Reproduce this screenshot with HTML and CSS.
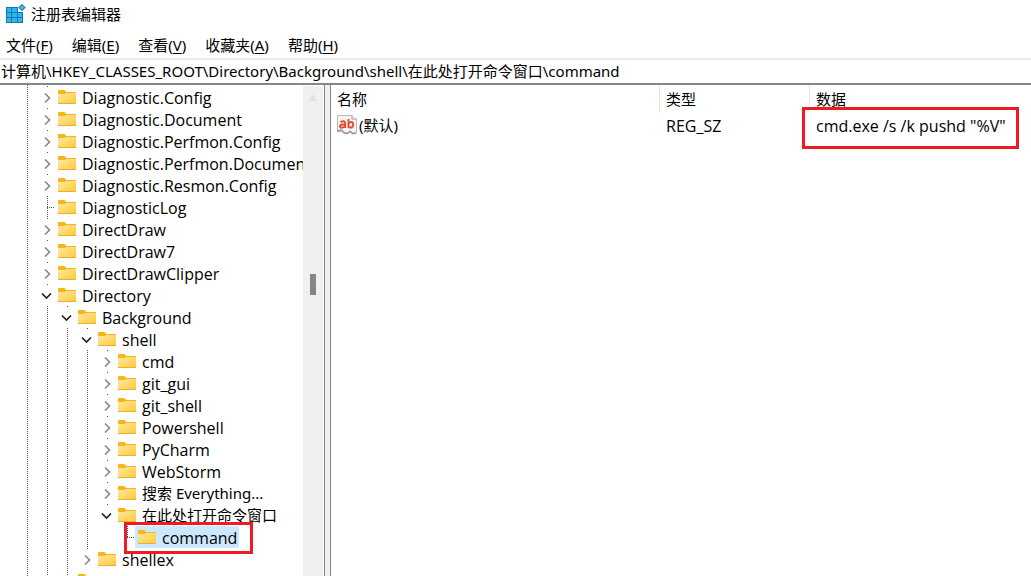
FILE: index.html
```html
<!DOCTYPE html>
<html lang="zh-CN">
  <head>
    <meta charset="UTF-8" />
    <title>注册表编辑器</title>
    <link rel="stylesheet" href="styles.css">
  </head>
  <body>
    <svg class="defs" aria-hidden="true">
      <defs>
        <linearGradient id="folderFill" x1="0" y1="0" x2="1" y2="1">
          <stop offset="0" stop-color="#ffe9a2" />
          <stop offset="1" stop-color="#ffc937" />
        </linearGradient>
        <symbol id="folder" viewBox="0 0 18 14">
          <path d="M0 1Q0 0 1 0H6.500L8 1.500V2H18V5H0Z" fill="#f8b51c" />
          <path d="M0 4H7L8 3H18V14H0Z" fill="url(#folderFill)" />
          <path d="M0 13.500H18" stroke="#eab030" />
        </symbol>
        <symbol id="right" viewBox="0 0 16 20">
          <path d="M6 6.500L10.500 11L6 15.500" fill="none" stroke="#8a8a8a" stroke-width="1.700" />
        </symbol>
        <symbol id="down" viewBox="0 0 16 20">
          <path d="M3 8.500L7.500 13L12 8.500" fill="none" stroke="#222" stroke-width="1.700" />
        </symbol>
      </defs>
    </svg>

    <!-- Barra de título -->
    <header class="titlebar">
      <svg class="app-icon" viewBox="0 0 20 20" aria-hidden="true">
        <path d="M0 3H12V8H17V19H0Z" fill="#0b78b8" />
        <path d="M1 4H5V8H1ZM6 4H11V8H6ZM1 9H5V13H1ZM6 9H11V13H6ZM12 9H16V13H12ZM1 14H5V18H1ZM6 14H11V18H6ZM12 14H16V18H12Z" fill="#35b4e4" />
        <path d="M16 -.2L19.800 3.500L16 7.200L12.200 3.500Z" fill="#1f84bd" />
        <path d="M16 1.500L18 3.500L16 5.500L14 3.500Z" fill="#55bfe8" />
      </svg>
      <h1>注册表编辑器</h1>
    </header>

    <!-- Menú -->
    <nav class="menu">
      <button>文件(<u>F</u>)</button>
      <button>编辑(<u>E</u>)</button>
      <button>查看(<u>V</u>)</button>
      <button>收藏夹(<u>A</u>)</button>
      <button>帮助(<u>H</u>)</button>
    </nav>

    <input class="address" type="text" aria-label="地址" value="计算机\HKEY_CLASSES_ROOT\Directory\Background\shell\在此处打开命令窗口\command" />

    <main class="panes">
      <!-- Árbol de claves -->
      <section class="tree-pane">
        <div class="tree">
          <ul id="tree" class="branch"></ul>
        </div>
        <div class="scrollbar">
          <svg class="scroll-up" viewBox="0 0 8 7" aria-hidden="true"><path d="M4 0L8 7H0Z" fill="#e2e2e2" /></svg>
          <div class="thumb"></div>
        </div>
      </section>

      <!-- Valores -->
      <section class="values-pane">
        <table class="values">
          <colgroup>
            <col class="col-name" />
            <col class="col-type" />
            <col />
          </colgroup>
          <thead>
            <tr><th>名称</th><th>类型</th><th>数据</th></tr>
          </thead>
          <tbody>
            <tr>
              <td>
                <div class="value-name">
                  <svg class="string-icon" viewBox="0 0 20 20" aria-hidden="true">
                    <path d="M.5 .5H15L19.500 4V18L16 19L13 17L10 19L7 18L4 16L.5 17Z" fill="#f4f4f4" stroke="#bbb" />
                    <path d="M15 .5V4H19.500" fill="#fff" stroke="#999" />
                    <path d="M.5 16L4 15L7 17.500L10 18.500L13 16.500L16 18.500L19 18" fill="none" stroke="#999" stroke-width="1.500" />
                    <path d="M3.500 7Q8 5 8 8V13M8 9.500Q3 9 3 11.500Q3.500 14 8 11.500M11.500 4V13M11.500 8.500Q16 5 16 9.500Q16 14 11.500 12" fill="none" stroke="#e0522d" stroke-width="2" />
                  </svg>
                  <span>(默认)</span>
                </div>
              </td>
              <td class="latin">REG_SZ</td>
              <td class="latin"><span class="marked">cmd.exe /s /k pushd "%V"</span></td>
            </tr>
          </tbody>
        </table>
      </section>
    </main>

    <script src="script.js"></script>
  </body>
</html>
```
FILE: styles.css
```css
* {
  box-sizing: border-box;
}

body {
  margin: 0;
  height: 100vh;
  display: flex;
  flex-direction: column;
  overflow: hidden;
  background: #fff;
  color: #000;
  font-family: "Noto Sans", "Noto Sans CJK SC", sans-serif;
  font-size: 15px;
  line-height: 22px;
}

button,
input {
  font: inherit;
  color: inherit;
  border: 0;
  padding: 0;
  background: none;
}

.latin {
  font-family: "Open Sans", sans-serif;
  font-size: 16px;
}

.defs {
  position: absolute;
  width: 0;
  height: 0;
}

/* Barra de título */
.titlebar {
  display: flex;
  align-items: center;
  gap: 5px;
  height: 30px;
  padding: 0 6px 2px;
}

.titlebar h1 {
  margin: 0;
  font-size: 15px;
  font-weight: normal;
}

.app-icon {
  width: 20px;
  height: 20px;
}

.menu {
  display: flex;
  gap: 19px;
  height: 28px;
  padding: 2px 6px 0;
  align-items: center;
}

.menu u {
  text-underline-offset: 2px;
}

.address {
  width: 100%;
  height: 27px;
  padding: 0 1px 2px;
  border-top: 2px solid #ececec;
  border-bottom: 2px solid #83868c;
}

.panes {
  flex: 1;
  min-height: 0;
  display: flex;
  background: #f0f0f0;
}

/* Árbol */
.tree-pane {
  flex: 0 0 325px;
  display: flex;
  background: #fff;
  border-right: 1px solid #83868c;
  overflow: hidden;
}

.tree {
  flex: 1;
  overflow: hidden;
  padding-top: 1px;
  padding-left: 39px;
  background: repeating-linear-gradient(#555 0 1px, #fff 1px 2px) 27px 0 / 1px 100% no-repeat;
}

.branch {
  list-style: none;
  margin: 0;
  padding: 0;
}

.branch .branch {
  padding-left: 20px;
}

.branch li {
  background: repeating-linear-gradient(#555 0 1px, #fff 1px 2px) 8px 0 / 1px 100% no-repeat;
}

.branch li:last-child {
  background-size: 1px 11px;
}

.row {
  display: flex;
  align-items: center;
  height: 22px;
  white-space: nowrap;
}

.toggle {
  flex: none;
  width: 16px;
  height: 20px;
  background: #fff;
}

.toggle svg {
  display: block;
  width: 16px;
  height: 20px;
}

.stub {
  flex: none;
  width: 8px;
  height: 1px;
  margin-left: 8px;
  background: repeating-linear-gradient(90deg, #555 0 1px, #fff 1px 2px);
}

.key {
  display: flex;
  align-items: center;
  gap: 6px;
  height: 22px;
  padding: 0 2px 0 3px;
  border-radius: 2px;
}

.key.selected {
  background: #cce8ff;
}

.key.latin > span,
td.latin {
  padding-top: 2px;
}

.key svg {
  flex: none;
  width: 18px;
  height: 14px;
}

/* Recuadro rojo */
.marked {
  position: relative;
}

.marked::after {
  content: "";
  position: absolute;
  inset: -4px -14px -6px -11px;
  border: 3px solid #ed1c24;
}

.scrollbar {
  flex: none;
  width: 20px;
  margin: 1px 1px 0 0;
  background: #f0f0f0;
  display: flex;
  flex-direction: column;
  align-items: center;
}

.scroll-up {
  flex: none;
  width: 8px;
  height: 7px;
  margin-top: 8px;
}

.thumb {
  width: 6px;
  height: 21px;
  margin-top: 173px;
  background: #858585;
}

/* Valores */
.values-pane {
  flex: 1;
  margin-left: 5px;
  border-left: 1px solid #83868c;
  background: #fff;
}

.values {
  width: 100%;
  table-layout: fixed;
  border-collapse: separate;
  border-spacing: 0;
  text-align: left;
}

.col-name {
  width: 329px;
}

.col-type {
  width: 150px;
}

.values th {
  height: 28px;
  padding: 0 6px;
  font-weight: normal;
  border-right: 1px solid #e5e5e5;
}

.values th:last-child {
  border-right: 0;
}

.values td {
  height: 22px;
  padding-left: 6px;
  padding-right: 6px;
  padding-bottom: 0;
  white-space: nowrap;
}

.values td:first-child {
  padding-top: 0;
}

.values .marked::after {
  inset: -8px -13px -12px -14px;
}

.value-name {
  display: flex;
  align-items: center;
  gap: 2px;
}

.string-icon {
  width: 20px;
  height: 20px;
}
```
FILE: script.js
```js
const keys = [
  { name: "Diagnostic.Config", closed: true },
  { name: "Diagnostic.Document", closed: true },
  { name: "Diagnostic.Perfmon.Config", closed: true },
  { name: "Diagnostic.Perfmon.Document", closed: true },
  { name: "Diagnostic.Resmon.Config", closed: true },
  { name: "DiagnosticLog" },
  { name: "DirectDraw", closed: true },
  { name: "DirectDraw7", closed: true },
  { name: "DirectDrawClipper", closed: true },
  {
    name: "Directory",
    children: [
      {
        name: "Background",
        children: [
          {
            name: "shell",
            children: [
              { name: "cmd", closed: true },
              { name: "git_gui", closed: true },
              { name: "git_shell", closed: true },
              { name: "Powershell", closed: true },
              { name: "PyCharm", closed: true },
              { name: "WebStorm", closed: true },
              { name: "搜索 Everything...", closed: true },
              {
                name: "在此处打开命令窗口",
                children: [{ name: "command", selected: true }],
              },
            ],
          },
          { name: "shellex", closed: true },
        ],
      },
      { name: "DefaultIcon" },
    ],
  },
  { name: "DirectShow", closed: true },
];

const icon = (id) => `<svg aria-hidden="true"><use href="#${id}"></use></svg>`;

// Dibuja una clave y sus subclaves
function renderKey(key) {
  const open = Boolean(key.children);
  const handle =
    open || key.closed
      ? `<button class="toggle" aria-label="${key.name}" aria-expanded="${open}">${icon(open ? "down" : "right")}</button>`
      : '<span class="stub"></span>';
  const latin = /^[\x20-\x7e]+$/.test(key.name) ? "latin" : "";
  const selected = key.selected ? "selected marked" : "";
  const label = `<span class="key ${latin} ${selected}">${icon("folder")}<span>${key.name}</span></span>`;
  const children = open
    ? `<ul class="branch">${key.children.map(renderKey).join("")}</ul>`
    : "";
  return `<li><div class="row">${handle}${label}</div>${children}</li>`;
}

document.getElementById("tree").innerHTML = keys.map(renderKey).join("");
```
